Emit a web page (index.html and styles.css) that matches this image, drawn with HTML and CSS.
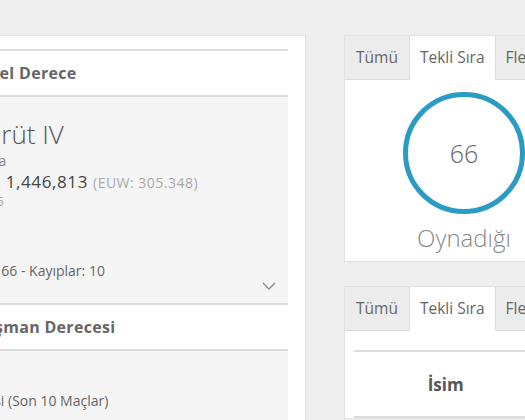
FILE: index.html
```html
<!DOCTYPE html>
<html lang="tr">
<head>
    <meta charset="UTF-8">
    <meta name="viewport" content="width=device-width, initial-scale=1.0">
    <title>Sihirdar Profili</title>
    <link rel="stylesheet" href="styles.css">
</head>
<body>
    <div class="page">
        <aside class="rank-card">
            <section class="rank-box">
                <h3 class="box-title">Yerel Derece</h3>
                <div class="box-body">
                    <div class="rank-info">
                        <div class="tier">Zümrüt IV</div>
                        <div class="queue">Tekli Sıra</div>
                        <div class="ladder"><span class="ladder-label">Sıralama</span> 1,446,813 <span class="region">(EUW: 305.348)</span></div>
                        <div class="lp">Puanı: 45</div>
                    </div>
                    <div class="record-row">
                        <span class="record">Kazanç: 66 - Kayıplar: 10</span>
                        <svg class="toggle" width="14" height="8" viewBox="0 0 14 8">
                            <polyline points="1,1 7,7 13,1" fill="none" stroke="#8a8a8a" stroke-width="1.3"/>
                        </svg>
                    </div>
                </div>
            </section>
            <section class="rank-box">
                <h3 class="box-title">Düşman Derecesi</h3>
                <div class="box-body enemy">
                    <span class="record">Derecesi (Son 10 Maçlar)</span>
                </div>
            </section>
        </aside>

        <div class="side">
            <div class="tab-card">
                <ul class="tabs">
                    <li>Tümü</li>
                    <li class="active">Tekli Sıra</li>
                    <li>Flex Sıra</li>
                </ul>
                <div class="played">
                    <div class="ring">66</div>
                    <div class="ring-label">Oynadığı</div>
                </div>
            </div>

            <div class="tab-card">
                <ul class="tabs">
                    <li>Tümü</li>
                    <li class="active">Tekli Sıra</li>
                    <li>Flex Sıra</li>
                </ul>
                <div class="champ-body">
                    <table class="champ-table">
                        <thead>
                            <tr>
                                <th class="col-name">İsim</th>
                                <th>Oyun</th>
                            </tr>
                        </thead>
                    </table>
                </div>
            </div>
        </div>
    </div>
</body>
</html>
```

FILE: styles.css
```css
/* Genel */
html, body {
    overflow: hidden;
}

body {
    margin: 0;
    font-family: 'Open Sans', 'DejaVu Sans', sans-serif;
    background: #efefef;
    color: #555;
}

.page {
    display: flex;
    align-items: flex-start;
    gap: 38px;
    padding-top: 35px;
    margin-left: -70px;
}

/* Sol kart: dereceler */
.rank-card {
    flex: 0 0 376px;
    box-sizing: border-box;
    background: white;
    border: 1px solid #e2e2e2;
    padding: 13px 17px 0;
}

.rank-box {
    border-top: 2px solid #dcdcdc;
}

.box-title {
    margin: 0;
    padding-left: 24px;
    line-height: 44px;
    font-size: 16px;
    font-weight: 700;
    letter-spacing: 0.3px;
    color: #666;
    background: white;
}

.box-body {
    border-top: 2px solid #dcdcdc;
    background: #f5f5f5;
    padding: 20px 12px 13px 0;
}

.tier {
    font-size: 26px;
    font-weight: 300;
    line-height: 34px;
    color: #555;
}

.queue {
    font-size: 14px;
    line-height: 20px;
    color: #888;
}

.ladder {
    font-size: 17px;
    line-height: 22px;
    letter-spacing: 0.6px;
    color: #444;
}

.ladder-label {
    font-size: 13px;
    letter-spacing: 0;
    color: #888;
}

.region {
    font-size: 14px;
    letter-spacing: 0.5px;
    color: #aaa;
}

.lp {
    font-size: 13px;
    line-height: 14px;
    color: #aaa;
}

.record-row {
    display: flex;
    justify-content: space-between;
    align-items: flex-end;
    margin-top: 53px;
}

.record {
    font-size: 14px;
    line-height: 20px;
    color: #666;
    margin-bottom: 9px;
}

.toggle {
    display: block;
}

.box-body.enemy {
    padding-top: 38px;
    height: 83px;
}

/* Sağ sütun: sekmeli kartlar */
.side {
    flex: 0 0 240px;
}

.tab-card {
    background: white;
    border: 1px solid #e2e2e2;
    margin-bottom: 24px;
}

.tabs {
    display: flex;
    margin: 0;
    padding: 0;
    list-style: none;
    background: #ececec;
}

.tabs li {
    padding: 0 10px;
    line-height: 43px;
    font-size: 15.5px;
    color: #666;
    white-space: nowrap;
    border-right: 1px solid #dcdcdc;
    border-bottom: 1px solid #dcdcdc;
}

.tabs li:first-child {
    padding: 0 11px;
}

.tabs li.active {
    background: white;
    border-bottom-color: white;
}

.played {
    display: flex;
    flex-direction: column;
    align-items: center;
    padding: 12px 0 8px;
}

.ring {
    width: 122px;
    height: 122px;
    box-sizing: border-box;
    border: 5px solid #2a9bc3;
    border-radius: 50%;
    display: flex;
    align-items: center;
    justify-content: center;
    font-size: 25px;
    font-weight: 300;
    color: #666;
}

.ring-label {
    margin-top: 9px;
    line-height: 30px;
    font-size: 24px;
    font-weight: 300;
    color: #888;
}

.champ-body {
    padding: 19px 0 0 9px;
}

.champ-table {
    border-collapse: collapse;
}

.champ-table th {
    height: 64px;
    padding: 0;
    border-top: 2px solid #dcdcdc;
    border-bottom: 2px solid #dcdcdc;
    font-size: 17px;
    font-weight: 700;
    color: #555;
}

.champ-table .col-name {
    width: 232px;
    text-align: center;
}
```
